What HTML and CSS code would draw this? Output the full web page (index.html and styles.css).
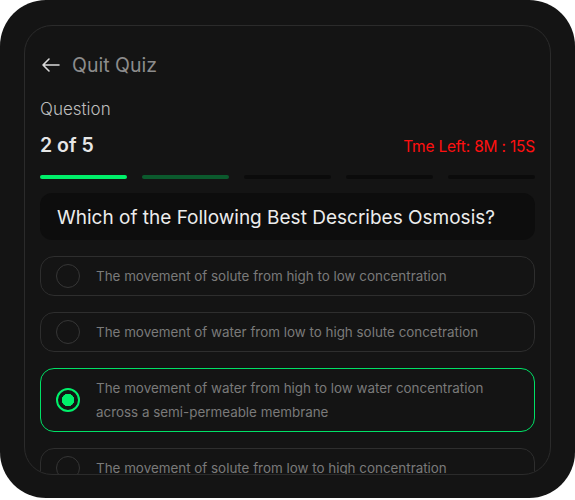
FILE: index.html
```html
<!DOCTYPE html>
<html lang="en">
<head>
  <meta charset="UTF-8">
  <meta name="viewport" content="width=device-width, initial-scale=1.0">
  <title>Quiz</title>
  <link rel="stylesheet" href="styles.css">
</head>
<body>
  <!-- ======= outer device frame ======= -->
  <div class="device">
    <div class="panel">

      <!-- back link -->
      <a class="quit" href="#">
        <svg class="quit-icon" width="20" height="16" viewBox="0 0 20 16" fill="none">
          <path d="M18 8H2M8 2L2 8l6 6" stroke="#d9d9d9" stroke-width="1.6" stroke-linecap="round" stroke-linejoin="round"/>
        </svg>
        <span>Quit Quiz</span>
      </a>

      <!-- question counter + timer -->
      <p class="label">Question</p>
      <div class="status">
        <span class="count">2 of 5</span>
        <span class="timer">Tme Left: 8M : 15S</span>
      </div>

      <div class="progress">
        <span class="step done"></span>
        <span class="step current"></span>
        <span class="step"></span>
        <span class="step"></span>
        <span class="step"></span>
      </div>

      <div class="question">Which of the Following Best Describes Osmosis?</div>

      <!-- answers -->
      <div class="options">
        <div class="option">
          <span class="radio"></span>
          <span class="option-text">The movement of solute from high to low concentration</span>
        </div>
        <div class="option">
          <span class="radio"></span>
          <span class="option-text">The movement of water from low to high solute concetration</span>
        </div>
        <div class="option selected">
          <span class="radio"></span>
          <span class="option-text">The movement of water from high to low water concentration across a semi-permeable membrane</span>
        </div>
        <div class="option">
          <span class="radio"></span>
          <span class="option-text">The movement of solute from low to high concentration</span>
        </div>
      </div>

    </div>
  </div>
</body>
</html>
```

FILE: styles.css
```css
/* ======= reset ======= */
* {
  box-sizing: border-box;
  margin: 0;
  padding: 0;
}

body {
  background: #fff;
  font-family: Inter, "Noto Sans", sans-serif;
  color: #ddd;
}

/* ======= frame ======= */
.device {
  width: 575px;
  height: 498px;
  padding: 25px 24px 0 24px;
  background: #141414;
  border-radius: 46px;
}
.panel {
  height: 450px;
  padding: 27px 15px 0 15px;
  border: 1px solid #2b2b2b;
  border-radius: 28px;
  overflow: hidden;
}

/* ======= header ======= */
.quit {
  display: flex;
  align-items: center;
  gap: 11px;
  height: 24px;
  color: #8c8c8c;
  font-size: 19.5px;
  text-decoration: none;
}
.quit-icon {
  margin-left: 1px;
}

.label {
  margin-top: 20px;
  font-size: 17px;
  line-height: 24px;
  color: #bdbdbd;
  font-weight: 300;
}

.status {
  display: flex;
  justify-content: space-between;
  align-items: baseline;
  margin-top: 10px;
}
.count {
  font-size: 19.5px;
  line-height: 28px;
  font-weight: 600;
  color: #e6e6e6;
}
.timer {
  font-size: 15.5px;
  color: #ff1010;
  letter-spacing: -0.2px;
}

/* ======= progress ======= */
.progress {
  display: flex;
  gap: 15px;
  margin-top: 16px;
}
.step {
  flex: 1;
  height: 4px;
  border-radius: 2px;
  background: #0b0b0b;
}
.step.done {
  background: #00f06a;
}
.step.current {
  background: #0b5a2d;
}

/* ======= question ======= */
.question {
  margin-top: 14px;
  padding: 1px 17px 0;
  height: 47px;
  display: flex;
  align-items: center;
  background: #0d0d0d;
  border-radius: 12px;
  font-size: 19px;
  color: #ececec;
}

/* ======= options ======= */
.options {
  display: flex;
  flex-direction: column;
  gap: 16px;
  margin-top: 16px;
}
.option {
  display: flex;
  align-items: center;
  gap: 16px;
  min-height: 40px;
  padding: 7px 16px 7px 15px;
  border: 1px solid #2e2e2e;
  border-radius: 14px;
}
.radio {
  flex: none;
  width: 24px;
  height: 24px;
  border: 1px solid #363636;
  border-radius: 50%;
}
.option-text {
  font-size: 13.4px;
  line-height: 24px;
  color: #7a7a7a;
}
.option.selected {
  border-color: #00e066;
}
.option.selected .radio {
  border: 2px solid #00f06a;
  background: radial-gradient(circle, #00f06a 0 6px, transparent 6.5px);
}
```
